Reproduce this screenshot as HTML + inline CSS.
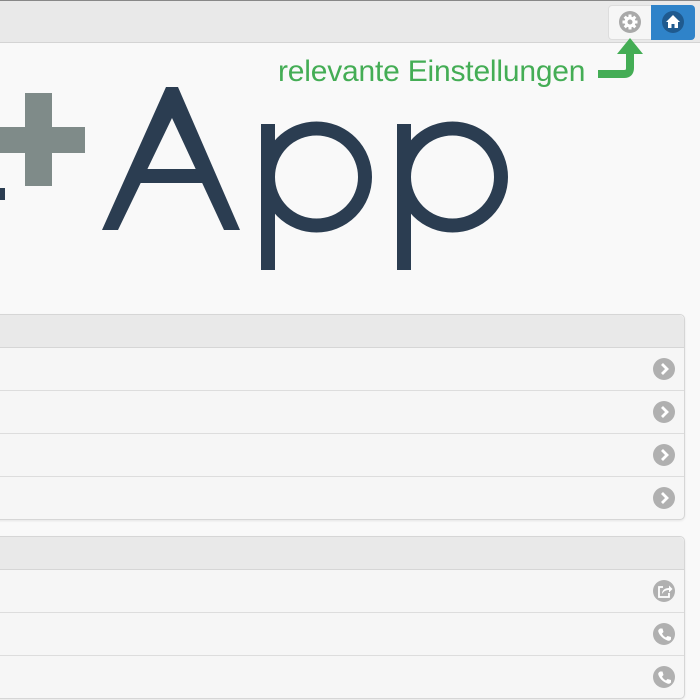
<!DOCTYPE html>
<html><head><style>
body{margin:0;width:700px;height:700px;overflow:hidden;background:#f9f9f9;font-family:"Liberation Sans",sans-serif;position:relative}
.top{position:absolute;left:0;top:0;width:700px;height:41px;background:#e9e9e9;border-top:1px solid #888;border-bottom:1px solid #d4d4d4}
.list{position:absolute;left:-10px;width:693px;border:1px solid #d6d6d6;border-radius:5px;background:#f6f6f6;box-shadow:0 1px 2px rgba(0,0,0,.08)}
.hd{height:32px;background:#e9e9e9;border-bottom:1px solid #d6d6d6;border-radius:5px 5px 0 0}
.row{height:42px;border-bottom:1px solid #ddd;position:relative}
.row:last-child{border-bottom:none}
.ic{position:absolute;right:9px;top:10px;width:22px;height:22px;border-radius:50%;background:#b0b0b0}
.ic svg{position:absolute;left:0;top:0}
</style></head><body>
<div class="top"></div>
<div style="position:absolute;left:608px;top:5px;width:43px;height:33px;background:#f6f6f6;border:1px solid #ddd;border-radius:4px 0 0 4px"></div>
<div style="position:absolute;left:651px;top:5px;width:44px;height:35px;background:#2f83c9;border-radius:0 4px 4px 0"></div>
<svg style="position:absolute;left:618px;top:10px" width="24" height="24" viewBox="0 0 24 24"><circle cx="12" cy="12" r="11" fill="#a9a9a9"/><g fill="#fff"><circle cx="12" cy="12" r="5.5"/><rect x="10.5" y="4.5" width="3" height="15"/><rect x="4.5" y="10.5" width="15" height="3"/><rect x="10.5" y="4.5" width="3" height="15" transform="rotate(45 12 12)"/><rect x="10.5" y="4.5" width="3" height="15" transform="rotate(-45 12 12)"/></g><circle cx="12" cy="12" r="2.5" fill="#a9a9a9"/></svg>
<svg style="position:absolute;left:661px;top:10px" width="24" height="24" viewBox="0 0 24 24"><circle cx="12" cy="12" r="11" fill="#1f5a8f"/><path d="M12 5L5 12h2v6h3.5v-4h3v4H17v-6h2z" fill="#fff"/></svg>
<div style="position:absolute;left:278px;top:54px;font-size:30px;line-height:36px;color:#44ad55;white-space:nowrap;letter-spacing:-0.2px">relevante Einstellungen</div>
<svg style="position:absolute;left:596px;top:36px" width="50" height="46"><path d="M2 38H28Q34 38 34 32V16" fill="none" stroke="#44ad55" stroke-width="8"/><path d="M21 18L34 2L47 18z" fill="#44ad55"/></svg>
<svg style="position:absolute;left:0;top:0" width="560" height="300">
<rect x="25" y="93" width="27" height="93" fill="#7f8b89"/><rect x="0" y="127" width="85" height="26" fill="#7f8b89"/>
<rect x="0" y="188" width="5" height="12" fill="#2b3d51"/>
<path d="M102 230L166 87H178L240 230H224L172 118L118 230Z" fill="#2b3d51"/>
<rect x="140" y="169" width="64" height="14" fill="#2b3d51"/>
<rect x="261" y="124" width="14" height="146" fill="#2b3d51"/>
<circle cx="316.5" cy="177" r="48.5" fill="none" stroke="#2b3d51" stroke-width="14"/>
<rect x="397" y="124" width="14" height="146" fill="#2b3d51"/>
<circle cx="452.5" cy="177" r="48.5" fill="none" stroke="#2b3d51" stroke-width="14"/>
</svg>
<div class="list" style="top:314px">
<div class="hd"></div>
<div class="row"><div class="ic"><svg width="22" height="22"><path d="M9 6l5 5-5 5" fill="none" stroke="#fff" stroke-width="2.8"/></svg></div></div>
<div class="row"><div class="ic"><svg width="22" height="22"><path d="M9 6l5 5-5 5" fill="none" stroke="#fff" stroke-width="2.8"/></svg></div></div>
<div class="row"><div class="ic"><svg width="22" height="22"><path d="M9 6l5 5-5 5" fill="none" stroke="#fff" stroke-width="2.8"/></svg></div></div>
<div class="row"><div class="ic"><svg width="22" height="22"><path d="M9 6l5 5-5 5" fill="none" stroke="#fff" stroke-width="2.8"/></svg></div></div>
</div>
<div class="list" style="top:536px">
<div class="hd"></div>
<div class="row"><div class="ic"><svg width="22" height="22"><path d="M10 7H6v10h10v-4" fill="none" stroke="#fff" stroke-width="1.8"/><path d="M9 14c0-4 3-6 7-6V5.5L19.5 9 16 12.5V10c-3 0-5 1-7 4z" fill="#fff"/></svg></div></div>
<div class="row"><div class="ic"><svg width="22" height="22"><path d="M7 5.5l2.5 0 1 3.5-1.5 1.5c1 2 2 3 4 4l1.5-1.5 3.5 1v2.5c-1 1-2 1.5-3 1.2C10 16 6.5 12.5 5.3 8.5 5 7.5 5.5 6.5 7 5.5z" fill="#fff"/></svg></div></div>
<div class="row"><div class="ic"><svg width="22" height="22"><path d="M7 5.5l2.5 0 1 3.5-1.5 1.5c1 2 2 3 4 4l1.5-1.5 3.5 1v2.5c-1 1-2 1.5-3 1.2C10 16 6.5 12.5 5.3 8.5 5 7.5 5.5 6.5 7 5.5z" fill="#fff"/></svg></div></div>
</div>
</body></html>
